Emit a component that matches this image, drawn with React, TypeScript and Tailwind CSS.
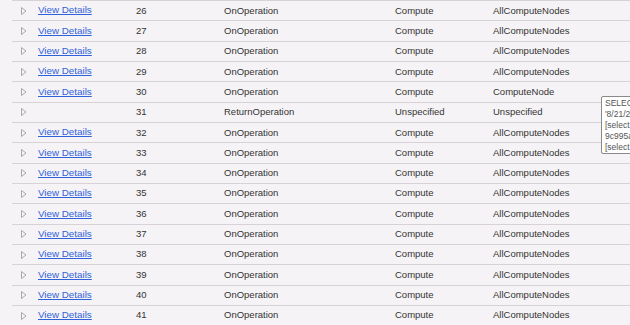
import React from "react";

type Row = { id: number; link: boolean; op: string; cat: string; target: string };

const rows: Row[] = [
  { id: 26, link: true, op: "OnOperation", cat: "Compute", target: "AllComputeNodes" },
  { id: 27, link: true, op: "OnOperation", cat: "Compute", target: "AllComputeNodes" },
  { id: 28, link: true, op: "OnOperation", cat: "Compute", target: "AllComputeNodes" },
  { id: 29, link: true, op: "OnOperation", cat: "Compute", target: "AllComputeNodes" },
  { id: 30, link: true, op: "OnOperation", cat: "Compute", target: "ComputeNode" },
  { id: 31, link: false, op: "ReturnOperation", cat: "Unspecified", target: "Unspecified" },
  { id: 32, link: true, op: "OnOperation", cat: "Compute", target: "AllComputeNodes" },
  { id: 33, link: true, op: "OnOperation", cat: "Compute", target: "AllComputeNodes" },
  { id: 34, link: true, op: "OnOperation", cat: "Compute", target: "AllComputeNodes" },
  { id: 35, link: true, op: "OnOperation", cat: "Compute", target: "AllComputeNodes" },
  { id: 36, link: true, op: "OnOperation", cat: "Compute", target: "AllComputeNodes" },
  { id: 37, link: true, op: "OnOperation", cat: "Compute", target: "AllComputeNodes" },
  { id: 38, link: true, op: "OnOperation", cat: "Compute", target: "AllComputeNodes" },
  { id: 39, link: true, op: "OnOperation", cat: "Compute", target: "AllComputeNodes" },
  { id: 40, link: true, op: "OnOperation", cat: "Compute", target: "AllComputeNodes" },
  { id: 41, link: true, op: "OnOperation", cat: "Compute", target: "AllComputeNodes" },
];

function Tri() {
  return (
    <svg width="6" height="8" viewBox="0 0 6 8" className="block">
      <path d="M0.5 0.5 L5 4 L0.5 7.5 Z" fill="none" stroke="#a8a8a8" strokeWidth="1" />
    </svg>
  );
}

export default function App() {
  return (
    <div
      className="relative w-[630px] h-[325px] overflow-hidden bg-[#f6f3f6] text-[#333] text-[9.5px]"
      style={{ fontFamily: '"Liberation Sans", Arial, sans-serif' }}
    >
      <div className="ml-[12px] border-t border-[#d6d2d6]">
        {rows.map((r) => (
          <div
            key={r.id}
            className="flex items-center h-[20.33px] border-b border-[#d6d2d6]"
          >
            <div className="w-[26px] pl-[9px] flex items-center">
              <Tri />
            </div>
            <div className="w-[98px]">
              {r.link ? (
                <a href="#" className="text-[#2f62d8] underline text-[9.8px]">
                  View Details
                </a>
              ) : null}
            </div>
            <div className="w-[88px]">{r.id}</div>
            <div className="w-[171px]">{r.op}</div>
            <div className="w-[98px]">{r.cat}</div>
            <div>{r.target}</div>
          </div>
        ))}
      </div>
      <div className="absolute left-[601px] top-[96px] w-[60px] h-[58px] bg-white border border-[#8a8a8a] rounded-[2px] px-[3px] pt-[1px] text-[8.5px] leading-[11px] text-[#555] whitespace-nowrap overflow-hidden">
        <div>SELECT</div>
        <div>'8/21/2012</div>
        <div>[select</div>
        <div>9c995a</div>
        <div>[select</div>
      </div>
    </div>
  );
}
